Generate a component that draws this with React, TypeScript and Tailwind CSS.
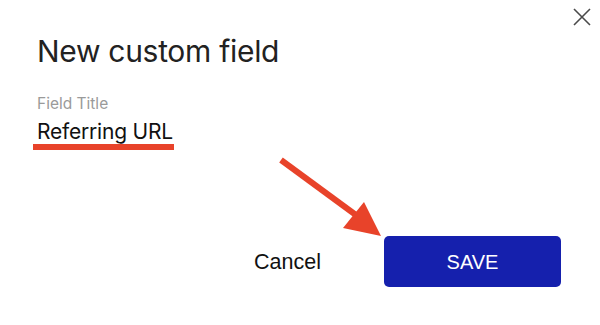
import React from "react";

export default function App() {
  return (
    <div className="relative w-[600px] h-[325px] bg-white overflow-hidden flex flex-col">
      <button className="absolute left-[573px] top-[8px] w-[18px] h-[18px]" aria-label="Close">
        <svg width="18" height="18" viewBox="0 0 18 18">
          <path d="M1 1 L17 17 M17 1 L1 17" stroke="#4a4a4a" strokeWidth="1.6" fill="none" />
        </svg>
      </button>

      <div className="pl-[37px] pt-[33px] flex flex-col" style={{ fontFamily: "Inter, sans-serif" }}>
        <h1 className="text-[30px] leading-[36px] text-[#222222] font-normal tracking-[-0.01em]">New custom field</h1>
        <div className="mt-[25px] text-[15.5px] leading-[20px] text-[#9a9a9a]">Field Title</div>
        <div className="mt-[4px] text-[21px] leading-[28px] text-[#111111] tracking-[-0.01em]">Referring URL</div>
        <div className="ml-[-4px] mt-[-2px] w-[141px] h-[6px] bg-[#e8432a]"></div>
      </div>

      <div className="mt-auto mb-[38px] mr-[39px] flex items-center justify-end gap-[63px]" style={{ fontFamily: '"Liberation Sans", Arial, sans-serif' }}>
        <button className="text-[21.5px] leading-[24px] text-[#111111]">Cancel</button>
        <button className="w-[177px] h-[51px] rounded-[5px] bg-[#1520ad] text-white text-[20px] leading-[24px]">SAVE</button>
      </div>

      <svg className="absolute left-0 top-0 pointer-events-none" width="600" height="325" viewBox="0 0 600 325">
        <line x1="281" y1="160" x2="360" y2="218" stroke="#e8432a" strokeWidth="6" strokeLinecap="butt" />
        <polygon points="381,236 343,228 364,202" fill="#e8432a" />
      </svg>
    </div>
  );
}
